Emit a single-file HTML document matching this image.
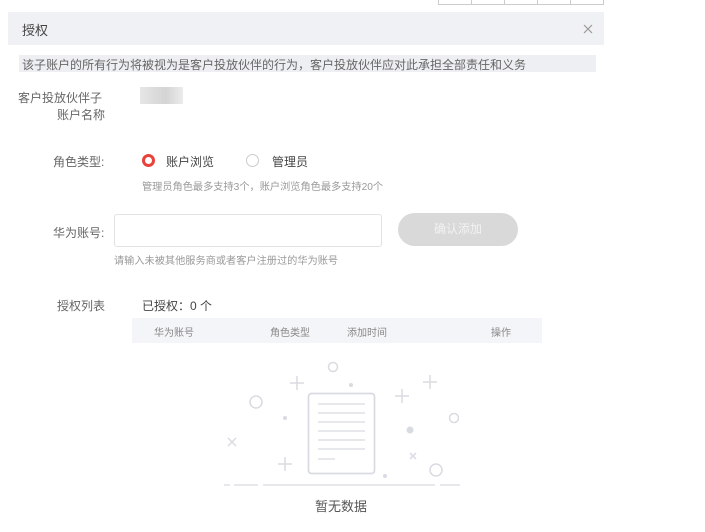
<!DOCTYPE html>
<html><head><meta charset="utf-8">
<style>
*{margin:0;padding:0;box-sizing:border-box}
body{width:705px;height:532px;background:#fff;position:relative;overflow:hidden;font-family:"Liberation Sans","Noto Sans CJK SC",sans-serif;color:#333}
.a{position:absolute;white-space:nowrap}
</style></head><body>
<div class="a" style="left:438px;top:-2px;width:166px;height:7px;border:1px solid #ccc;border-top:none"></div>
<div class="a" style="left:471px;top:0;width:1px;height:5px;background:#ccc"></div>
<div class="a" style="left:504px;top:0;width:1px;height:5px;background:#ccc"></div>
<div class="a" style="left:537px;top:0;width:1px;height:5px;background:#ccc"></div>
<div class="a" style="left:570px;top:0;width:1px;height:5px;background:#ccc"></div>

<div class="a" style="left:8px;top:12px;width:596px;height:33px;background:#f0f1f4"></div>
<div class="a" style="left:22px;top:20px;font-size:13px;color:#444">授权</div>
<svg class="a" style="left:583px;top:24px" width="10" height="10" stroke="#999" stroke-width="1.2"><path d="M1 1l8 8M9 1l-8 8"/></svg>

<div class="a" style="left:19px;top:55px;width:577px;height:17px;background:#eeeff2"></div>
<div class="a" style="left:22px;top:56px;font-size:12px;color:#666">该子账户的所有行为将被视为是客户投放伙伴的行为，客户投放伙伴应对此承担全部责任和义务</div>

<div class="a" style="left:18px;top:89px;font-size:12px;color:#666">客户投放伙伴子</div>
<div class="a" style="left:57px;top:106px;font-size:12px;color:#666">账户名称</div>
<div class="a" style="left:140px;top:87px;width:43px;height:17px;background:linear-gradient(90deg,#e6e6e6,#d4d4d4 60%,#ececec)"></div>

<div class="a" style="left:53px;top:153px;font-size:12px;color:#666">角色类型:</div>
<div class="a" style="left:142px;top:154px;width:13px;height:13px;border:3.5px solid #e8423b;border-radius:50%"></div>
<div class="a" style="left:166px;top:153px;font-size:12px;color:#444">账户浏览</div>
<div class="a" style="left:246px;top:154px;width:13px;height:13px;border:1px solid #ccc;border-radius:50%"></div>
<div class="a" style="left:272px;top:153px;font-size:12px;color:#444">管理员</div>
<div class="a" style="left:142px;top:178px;font-size:10.2px;color:#999">管理员角色最多支持3个，账户浏览角色最多支持20个</div>

<div class="a" style="left:53px;top:224px;font-size:12px;color:#666">华为账号:</div>
<div class="a" style="left:114px;top:214px;width:268px;height:33px;border:1px solid #e2e2e2;border-radius:3px"></div>
<div class="a" style="left:398px;top:213px;width:120px;height:33px;background:#d9d9d9;border-radius:17px;color:#f2f2f2;font-size:12px;text-align:center;line-height:33px">确认添加</div>
<div class="a" style="left:114px;top:252px;font-size:10.2px;color:#999">请输入未被其他服务商或者客户注册过的华为账号</div>

<div class="a" style="left:57px;top:297px;font-size:12px;color:#666">授权列表</div>
<div class="a" style="left:142px;top:297px;font-size:12px;color:#444">已授权：0 个</div>
<div class="a" style="left:132px;top:318px;width:410px;height:25px;background:#f4f5f8"></div>
<div class="a" style="left:154px;top:324px;font-size:10px;color:#888">华为账号</div>
<div class="a" style="left:270px;top:324px;font-size:10px;color:#888">角色类型</div>
<div class="a" style="left:347px;top:324px;font-size:10px;color:#888">添加时间</div>
<div class="a" style="left:491px;top:324px;font-size:10px;color:#888">操作</div>

<svg class="a" style="left:200px;top:350px" width="280" height="150" viewBox="0 0 280 150" fill="none" stroke="#d8dbe1" stroke-width="1.5">
<rect x="108.5" y="43.5" width="66" height="80" rx="3" stroke-width="1.7"/>
<path d="M118 54h47M118 63h47M118 72h47M118 81h47M118 90h47M118 99h47M118 109h17" stroke-width="1.3"/>
<path d="M24 135h6M34 135h24M63 135h172M240 135h20" stroke-width="1.3"/>
<circle cx="133" cy="17" r="4.5"/><circle cx="56" cy="52" r="6"/><circle cx="254" cy="68" r="4.5"/><circle cx="236" cy="120" r="6"/>
<path d="M97 26v14M90 33h14M230 25v14M223 32h14M202 39v14M195 46h14M85 107v14M78 114h14"/>
<path d="M28 88l8 8M36 88l-8 8M210 103l6 6M216 103l-6 6"/>
<g fill="#d8dbe1" stroke="none"><circle cx="151" cy="35" r="2"/><circle cx="85" cy="68" r="2"/><circle cx="210" cy="80" r="3.5"/><circle cx="185" cy="126" r="2"/></g>
</svg>
<div class="a" style="left:315px;top:496px;font-size:13px;color:#555">暂无数据</div>
</body></html>
